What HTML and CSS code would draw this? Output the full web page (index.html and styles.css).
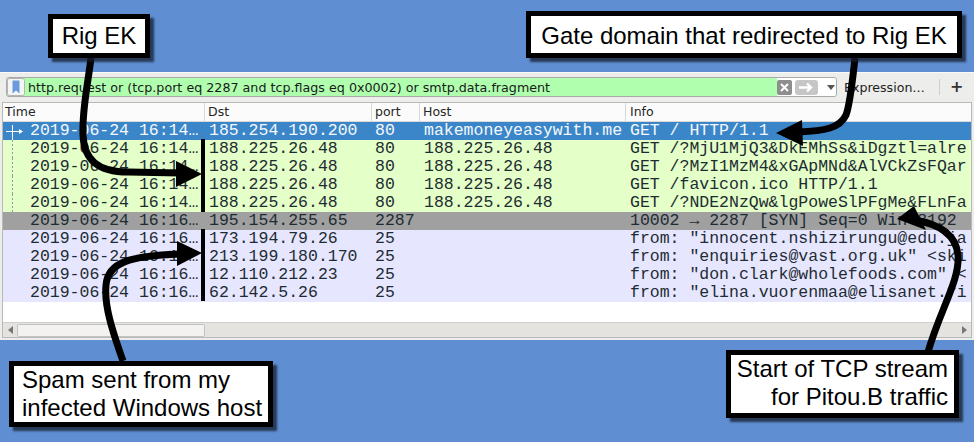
FILE: index.html
```html
<!DOCTYPE html>
<html>
<head>
<meta charset="utf-8">
<link rel="stylesheet" href="styles.css">
</head>
<body>
<div class="screen">
  <div class="topband"></div>
  <div class="window">
    <div class="toolbar">
      <div class="filter">
        <span class="bm"><svg width="18" height="18" viewBox="0 0 18 18"><rect x="0.5" y="0.5" width="17" height="17" rx="2" fill="#f4f4f4" stroke="#b4b4b4"/><path d="M5.5 2.5h7v13l-3.5-3-3.5 3z" fill="#6a9bdc"/></svg></span>
        <span class="ftext">http.request or (tcp.port eq 2287 and tcp.flags eq 0x0002) or smtp.data.fragment</span>
        <span class="ctrls">
          <svg class="clear" width="15" height="15" viewBox="0 0 15 15"><rect width="15" height="15" rx="2" fill="#8e8e8e"/><path d="M4 4l7 7M11 4l-7 7" stroke="#fff" stroke-width="2"/></svg>
          <svg class="apply" width="23" height="15" viewBox="0 0 23 15"><rect width="23" height="15" rx="3" fill="#c6c6c6"/><path d="M4 7.5h12M12 3.5l4 4-4 4" stroke="#fff" stroke-width="2.4" fill="none"/></svg>
          <svg class="drop" width="8" height="5" viewBox="0 0 8 5"><path d="M0 0h8l-4 5z" fill="#555"/></svg>
        </span>
      </div>
      <span class="expr">Expression…</span>
      <span class="sep"></span>
      <span class="plus">+</span>
    </div>
    <div class="list">
      <div class="grid head">
        <div class="hc hc-time">Time</div>
        <div class="hc">Dst</div>
        <div class="hc">port</div>
        <div class="hc">Host</div>
        <div class="hc hc-last">Info</div>
      </div>
      <div class="grid row sel">
        <div class="c time"><span class="mark"><svg width="27" height="18" viewBox="0 0 27 18"><path d="M3 9.5h16" stroke="#fff" stroke-width="1"/><path d="M9.5 3v15" stroke="#fff" stroke-width="1"/><path d="M16 7l4 2.5-4 2.5z" fill="#fff"/></svg></span>2019-06-24 16:14…</div>
        <div class="c">185.254.190.200</div>
        <div class="c">80</div>
        <div class="c">makemoneyeasywith.me</div>
        <div class="c info">GET / HTTP/1.1</div>
      </div>
      <div class="grid row http">
        <div class="c time"><span class="mark dash"></span>2019-06-24 16:14…</div>
        <div class="c">188.225.26.48</div>
        <div class="c">80</div>
        <div class="c">188.225.26.48</div>
        <div class="c info">GET /?MjU1MjQ3&amp;DkEMhSs&amp;iDgztl=alreadyw&amp;YVxgGJnq</div>
      </div>
      <div class="grid row http">
        <div class="c time"><span class="mark dash"></span>2019-06-24 16:14…</div>
        <div class="c">188.225.26.48</div>
        <div class="c">80</div>
        <div class="c">188.225.26.48</div>
        <div class="c info">GET /?MzI1MzM4&amp;xGApMNd&amp;AlVCkZsFQarsOf&amp;sbq</div>
      </div>
      <div class="grid row http">
        <div class="c time"><span class="mark dash"></span>2019-06-24 16:14…</div>
        <div class="c">188.225.26.48</div>
        <div class="c">80</div>
        <div class="c">188.225.26.48</div>
        <div class="c info">GET /favicon.ico HTTP/1.1</div>
      </div>
      <div class="grid row http">
        <div class="c time"><span class="mark dash"></span>2019-06-24 16:14…</div>
        <div class="c">188.225.26.48</div>
        <div class="c">80</div>
        <div class="c">188.225.26.48</div>
        <div class="c info">GET /?NDE2NzQw&amp;lgPoweSlPFgMe&amp;FLnFaZbd</div>
      </div>
      <div class="grid row syn">
        <div class="c time"><span class="mark"></span>2019-06-24 16:16…</div>
        <div class="c">195.154.255.65</div>
        <div class="c">2287</div>
        <div class="c"></div>
        <div class="c info">10002 → 2287 [SYN] Seq=0 Win=8192 Len=0</div>
      </div>
      <div class="grid row smtp">
        <div class="c time"><span class="mark"></span>2019-06-24 16:16…</div>
        <div class="c">173.194.79.26</div>
        <div class="c">25</div>
        <div class="c"></div>
        <div class="c info">from: "innocent.nshizirungu@edu.ja"</div>
      </div>
      <div class="grid row smtp">
        <div class="c time"><span class="mark"></span>2019-06-24 16:16…</div>
        <div class="c">213.199.180.170</div>
        <div class="c">25</div>
        <div class="c"></div>
        <div class="c info">from: "enquiries@vast.org.uk" &lt;skinner&gt;</div>
      </div>
      <div class="grid row smtp">
        <div class="c time"><span class="mark"></span>2019-06-24 16:16…</div>
        <div class="c">12.110.212.23</div>
        <div class="c">25</div>
        <div class="c"></div>
        <div class="c info">from: "don.clark@wholefoods.com" &lt;don&gt;</div>
      </div>
      <div class="grid row smtp">
        <div class="c time"><span class="mark"></span>2019-06-24 16:16…</div>
        <div class="c">62.142.5.26</div>
        <div class="c">25</div>
        <div class="c"></div>
        <div class="c info">from: "elina.vuorenmaa@elisanet.fi"</div>
      </div>
      <div class="empty"></div>
      <div class="hscroll">
        <span class="sarrow"><svg width="5" height="8" viewBox="0 0 5 8"><path d="M5 0v8L0 4z" fill="#777"/></svg></span>
        <span class="thumb"></span>
        <span class="track"></span>
        <span class="sarrow"><svg width="5" height="8" viewBox="0 0 5 8"><path d="M0 0v8l5-4z" fill="#777"/></svg></span>
      </div>
    </div>
    <div class="grip"></div>
  </div>

  <svg class="arrows" width="974" height="442" viewBox="0 0 974 442">
    <rect x="201" y="139" width="4" height="73" fill="#000"/>
    <rect x="201" y="229" width="4" height="72" fill="#000"/>
    <g fill="none" stroke="#000" stroke-width="7" stroke-linecap="butt">
      <path d="M91 58C87 90 82 110 83 135C84 160 98 172 128 172L180 173"/>
      <path d="M123 361C112 330 104 305 106 285C108 262 130 256 180 254"/>
      <path d="M855 58C852 85 850 105 846 115C840 128 825 131 798 132"/>
      <path d="M928 352C940 310 960 280 958 255C956 235 940 224 914 220"/>
    </g>
    <g fill="#000">
      <path d="M202 174L176 161L176 187Z"/>
      <path d="M202 253L177 241L177 266Z"/>
      <path d="M776 133L802 120L803 146Z"/>
      <path d="M897 219L914 206L926 230Z"/>
    </g>
  </svg>

  <div class="callout c1">Rig EK</div>
  <div class="callout c2">Gate domain that redirected to Rig EK</div>
  <div class="callout c3">Spam sent from my<br>infected Windows host</div>
  <div class="callout c4">Start of TCP stream<br>for Pitou.B traffic</div>
</div>
</body>
</html>
```
FILE: styles.css
```css
* { box-sizing: border-box; }
html, body { margin: 0; padding: 0; }
body { background: #5f8fd2; font-family: "DejaVu Sans", sans-serif; }

.screen { position: relative; width: 974px; height: 442px; overflow: hidden; background: #5f8fd2; }
.topband { height: 72px; }

.window {
  height: 268px;
  background: #ededeb;
  border-top: 1px solid #fafafa;
  padding-bottom: 2px;
  display: flex;
  flex-direction: column;
}

.toolbar {
  height: 29px;
  flex: none;
  display: flex;
  align-items: flex-start;
  padding: 4px 0 0 6px;
}
.filter {
  width: 831px;
  height: 20px;
  border: 1px solid #a9a9a9;
  border-radius: 3px;
  background: #afffaf;
  display: flex;
  align-items: center;
  overflow: hidden;
}
.bm { width: 18px; height: 18px; flex: none; display: flex; }
.ftext { flex: 1; font-size: 12.7px; color: #1a1a1a; padding-left: 3px; white-space: nowrap; overflow: hidden; }
.ctrls {
  flex: none;
  height: 18px;
  width: 59px;
  background: #fff;
  display: flex;
  align-items: center;
  gap: 3px;
}
.drop { margin-left: 6px; }
.expr { font-size: 12.6px; color: #222; margin-left: 7px; margin-top: 3px; }
.sep { width: 1px; height: 16px; background: #cfcfcf; margin-left: 14px; margin-top: 2px; }
.plus { font-size: 16px; font-weight: bold; color: #333; margin-left: 10px; }

.list {
  margin: 0 2px;
  height: 236px;
  background: #fff;
  border: 1px solid #b9b9b9;
  display: flex;
  flex-direction: column;
}
.grid { display: grid; grid-template-columns: 202px 167px 48px 206px 1fr; }
.head { height: 19px; flex: none; background: #fbfbfb; border-bottom: 1px solid #dadada; }
.hc {
  font-size: 12.5px;
  color: #262626;
  line-height: 18px;
  padding-left: 3px;
  border-right: 1px solid #d8d8d8;
  white-space: nowrap;
}
.hc-time { padding-left: 2px; }
.hc-last { border-right: none; padding-left: 4px; }

.row {
  height: 18px;
  flex: none;
  padding-right: 4px;
  font-family: "Liberation Mono", monospace;
  font-size: 16.5px;
  line-height: 18px;
  color: #1d2c33;
}
.c { white-space: nowrap; overflow: hidden; padding-left: 4px; }
.c:nth-child(3) { padding-left: 3px; }
.time { padding-left: 0; display: flex; }
.mark { width: 27px; flex: none; height: 18px; }
.mark.dash { background: linear-gradient(#999 50%, transparent 50%) 9px 0 / 1px 4px repeat-y; }
.info { padding-left: 4px; }

.sel { background: #3b86c8; color: #f4f8fc; }
.http { background: #e4ffc7; }
.syn { background: #a0a0a0; }
.smtp { background: #e7e6ff; }

.empty { height: 20px; flex: none; }
.hscroll {
  height: 15px;
  flex: none;
  background: #e4e3e0;
  border-top: 1px solid #cfcfcc;
  display: flex;
  align-items: center;
}
.sarrow { width: 14px; height: 14px; display: flex; align-items: center; justify-content: center; flex: none; }
.thumb {
  width: 188px;
  height: 13px;
  background: #f3f2f0;
  border: 1px solid #c3c3c0;
  border-radius: 2px;
  flex: none;
}
.track { flex: 1; }
.grip { height: 2px; }

.arrows { position: absolute; left: 0; top: 0; }

.callout {
  position: absolute;
  background: #fff;
  border: 5px solid #000;
  box-shadow: 4px 4px 2px rgba(20, 28, 45, 0.75);
  font-family: "Liberation Sans", Arial, sans-serif;
  font-size: 24px;
  color: #000;
  white-space: nowrap;
}
.c1 { left: 48px; top: 14px; width: 102px; height: 44px; line-height: 34px; text-align: center; }
.c2 { left: 526px; top: 11px; width: 436px; height: 47px; line-height: 37px; text-align: center; padding-top: 1px; }
.c3 { left: 9px; top: 361px; width: 264px; height: 66px; line-height: 28px; padding-left: 8px; }
.c4 { left: 726px; top: 350px; width: 233px; height: 68px; line-height: 28px; text-align: right; padding-right: 6px; }
```
